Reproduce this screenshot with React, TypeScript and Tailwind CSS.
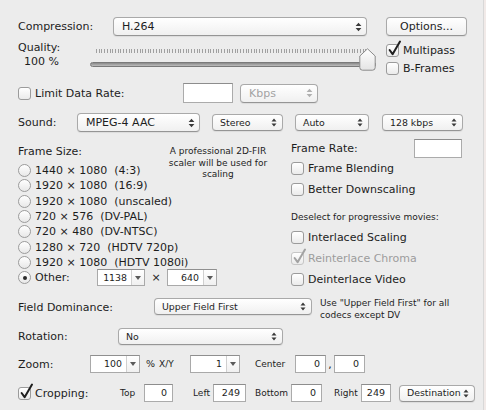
import React from "react";

function Arrows({ small, disabled }: { small?: boolean; disabled?: boolean }) {
  const c = disabled ? "#b0b0b0" : "#3a3a3a";
  return small ? (
    <svg width="6" height="9" viewBox="0 0 6 9" className="shrink-0">
      <path d="M0.5 3.6 L3 0.6 L5.5 3.6Z M0.5 5.4 L3 8.4 L5.5 5.4Z" fill={c} />
    </svg>
  ) : (
    <svg width="7" height="10" viewBox="0 0 7 10" className="shrink-0">
      <path d="M0.6 4 L3.5 0.7 L6.4 4Z M0.6 6 L3.5 9.3 L6.4 6Z" fill={c} />
    </svg>
  );
}

function Popup({
  label,
  className,
  small,
  disabled,
}: {
  label: string;
  className: string;
  small?: boolean;
  disabled?: boolean;
}) {
  return (
    <div
      className={`flex shrink-0 items-center justify-between rounded-[4px] border border-[#a9a9a9] border-b-[#959595] bg-gradient-to-b from-white to-[#f0f0f0] shadow-[0_1px_1px_rgba(0,0,0,0.07)] ${
        small ? "pl-[7px] pr-[5px] text-[9.4px]" : "pl-[8px] pr-[4px]"
      } ${disabled ? "text-[#a3a3a3]" : ""} ${className}`}
    >
      <span className="whitespace-pre leading-none">{label}</span>
      <Arrows small={small} disabled={disabled} />
    </div>
  );
}

function Check({ checked, disabled }: { checked?: boolean; disabled?: boolean }) {
  return (
    <span
      className={`relative inline-block h-[13px] w-[13px] shrink-0 rounded-[3px] border bg-gradient-to-b from-white to-[#ebebeb] ${
        disabled ? "border-[#c6c6c6]" : "border-[#9b9b9b]"
      }`}
    >
      {checked && (
        <svg className="absolute left-[0px] top-[-5px]" width="15" height="17" viewBox="0 0 15 17">
          <path
            d="M2.6 10 L5.6 14.2 L13 1.5"
            fill="none"
            stroke={disabled ? "#a2a2a2" : "#1f1f1f"}
            strokeWidth="2"
            strokeLinecap="round"
            strokeLinejoin="round"
          />
        </svg>
      )}
    </span>
  );
}

function CheckRow({
  label,
  checked,
  disabled,
  className,
}: {
  label: string;
  checked?: boolean;
  disabled?: boolean;
  className: string;
}) {
  return (
    <div className={`flex shrink-0 items-center gap-[4px] ${disabled ? "text-[#9c9c9c]" : ""} ${className}`}>
      <Check checked={checked} disabled={disabled} />
      <span className="whitespace-nowrap leading-none">{label}</span>
    </div>
  );
}

function Radio({ selected }: { selected?: boolean }) {
  return (
    <span className="flex h-[13px] w-[13px] shrink-0 items-center justify-center rounded-full border border-[#9b9b9b] bg-gradient-to-b from-white to-[#e8e8e8]">
      {selected && <span className="h-[4px] w-[4px] rounded-full bg-[#2a2a2a]" />}
    </span>
  );
}

function Combo({ value, className }: { value: string; className: string }) {
  return (
    <div className={`flex shrink-0 border border-[#a9a9a9] border-t-[#8f8f8f] bg-white ${className}`}>
      <div className="flex flex-1 items-center justify-end pr-[4px] text-[9.4px] leading-none">{value}</div>
      <div className="flex w-[13px] items-center justify-center border-l border-[#d0d0d0] bg-gradient-to-b from-white to-[#f0f0f0]">
        <svg width="6" height="4" viewBox="0 0 6 4">
          <path d="M0 0 H6 L3 4Z" fill="#5a5a5a" />
        </svg>
      </div>
    </div>
  );
}

function Field({ value, className }: { value?: string; className: string }) {
  return (
    <div
      className={`flex shrink-0 items-center justify-end border border-[#ababab] border-t-[#8d8d8d] bg-white pr-[5px] text-[9.5px] leading-none ${className}`}
    >
      {value}
    </div>
  );
}

const sizes: string[] = [
  "1440 × 1080  (4:3)",
  "1920 × 1080  (16:9)",
  "1920 × 1080  (unscaled)",
  "720 × 576  (DV-PAL)",
  "720 × 480  (DV-NTSC)",
  "1280 × 720  (HDTV 720p)",
  "1920 × 1080  (HDTV 1080i)",
];

export default function App() {
  return (
    <div className="flex h-[410px] w-[486px] overflow-hidden bg-[#ececec] font-['DejaVu_Sans',sans-serif] text-[11px] text-[#1d1d1d]">
      <div className="flex w-[484px] shrink-0 flex-col border-r border-[#d8d8d8] pl-[18px]">
        {/* Compression */}
        <div className="mt-[17px] flex h-[19px] items-center">
          <div className="w-[95px] shrink-0 leading-none">Compression:</div>
          <Popup label="H.264" className="h-[19px] w-[254px]" />
          <div className="ml-[19px] flex h-[19px] w-[81px] shrink-0 items-center justify-center rounded-[4px] border border-[#a9a9a9] border-b-[#959595] bg-gradient-to-b from-white to-[#f0f0f0] shadow-[0_1px_1px_rgba(0,0,0,0.07)] leading-none">
            Options...
          </div>
        </div>

        {/* Quality */}
        <div className="mt-[5px] flex h-[36px] items-start">
          <div className="w-[72px] shrink-0 leading-[14px]">
            <div>Quality:</div>
            <div className="pl-[6px]">100 %</div>
          </div>
          <div className="relative h-[30px] w-[286px] shrink-0">
            <div className="ml-[6px] mr-[8px] mt-[8px] h-[4px] bg-[repeating-linear-gradient(90deg,#a0a0a0_0px,#a0a0a0_1px,transparent_1px,transparent_2.72px)]" />
            <div className="mt-[9px] h-[5px] rounded-full border border-[#7a7a7a] bg-gradient-to-b from-[#8a8a8a] to-[#bdbdbd]" />
            <svg className="absolute left-[269px] top-[7px]" width="17" height="23" viewBox="0 0 17 23">
              <defs>
                <linearGradient id="thumbg" x1="0" y1="0" x2="0" y2="1">
                  <stop offset="0" stopColor="#ffffff" />
                  <stop offset="1" stopColor="#e4e4e4" />
                </linearGradient>
              </defs>
              <path
                d="M8.5 0.8 L16.2 8 V19.5 Q16.2 22.2 13.5 22.2 H3.5 Q0.8 22.2 0.8 19.5 V8 Z"
                fill="url(#thumbg)"
                stroke="#8a8a8a"
                strokeWidth="1"
              />
            </svg>
          </div>
          <div className="ml-[10px] flex flex-col">
            <CheckRow label="Multipass" checked className="h-[18px]" />
            <CheckRow label="B-Frames" className="h-[18px]" />
          </div>
        </div>

        {/* Limit data rate */}
        <div className="mt-[6px] flex h-[20px] items-center">
          <CheckRow label="Limit Data Rate:" className="w-[165px]" />
          <Field className="h-[20px] w-[50px]" />
          <Popup label="Kbps" disabled className="ml-[7px] h-[19px] w-[78px]" />
        </div>

        {/* Sound */}
        <div className="mt-[10px] flex h-[19px] items-center">
          <div className="w-[59px] shrink-0 leading-none">Sound:</div>
          <Popup label="MPEG-4 AAC" className="h-[19px] w-[123px]" />
          <Popup label="Stereo" small className="ml-[12px] h-[17px] w-[71px]" />
          <Popup label="Auto" small className="ml-[12px] h-[17px] w-[74px]" />
          <Popup label="128 kbps" small className="ml-[13px] h-[17px] w-[81px]" />
        </div>

        {/* Frame size block */}
        <div className="mt-[7px] flex items-start">
          <div className="flex w-[147px] shrink-0 flex-col">
            <div className="mt-[6px] leading-[14px]">Frame Size:</div>
            <div className="mt-[4px] flex flex-col">
              {sizes.map((t) => (
                <div key={t} className="flex h-[15.3px] items-center gap-[4px]">
                  <Radio />
                  <span className="shrink-0 whitespace-pre leading-none">{t}</span>
                </div>
              ))}
              <div className="flex h-[15.3px] items-center">
                <Radio selected />
                <span className="ml-[4px] w-[62px] shrink-0 leading-none">Other:</span>
                <Combo value="1138" className="h-[17px] w-[48px]" />
                <span className="w-[22px] shrink-0 text-center leading-none">×</span>
                <Combo value="640" className="h-[17px] w-[50px]" />
              </div>
            </div>
          </div>
          <div className="mt-[7px] w-[106px] shrink-0 text-center text-[9px] leading-[11.5px]">
            A professional 2D-FIR
            <br />
            scaler will be used for
            <br />
            scaling
          </div>
          <div className="ml-[20px] flex w-[171px] shrink-0 flex-col">
            <div className="flex h-[19px] items-center justify-between">
              <span className="leading-none">Frame Rate:</span>
              <Field className="h-[19px] w-[48px]" />
            </div>
            <CheckRow label="Frame Blending" className="h-[21px]" />
            <CheckRow label="Better Downscaling" className="h-[21px]" />
            <div className="mt-[11px] text-[9px] leading-[12px]">Deselect for progressive movies:</div>
            <div className="mt-[4px] flex flex-col">
              <CheckRow label="Interlaced Scaling" className="h-[21px]" />
              <CheckRow label="Reinterlace Chroma" checked disabled className="h-[21px]" />
              <CheckRow label="Deinterlace Video" className="h-[21px]" />
            </div>
          </div>
        </div>

        {/* Field dominance */}
        <div className="mt-[7px] flex items-start">
          <div className="mt-[2px] w-[136px] shrink-0 leading-[17px]">Field Dominance:</div>
          <Popup label="Upper Field First" small className="mt-[1px] h-[17px] w-[158px]" />
          <div className="ml-[8px] shrink-0 text-[9px] leading-[12px]">
            Use "Upper Field First" for all
            <br />
            codecs except DV
          </div>
        </div>

        {/* Rotation */}
        <div className="mt-[7px] flex h-[17px] items-center">
          <div className="w-[100px] shrink-0 leading-none">Rotation:</div>
          <Popup label="No" small className="h-[17px] w-[165px]" />
        </div>

        {/* Zoom */}
        <div className="mt-[10px] flex h-[18px] items-center">
          <div className="w-[72px] shrink-0 leading-none">Zoom:</div>
          <Combo value="100" className="h-[18px] w-[50px]" />
          <span className="w-[18px] shrink-0 pl-[6px] text-[9.5px] leading-none">%</span>
          <span className="w-[32px] shrink-0 pl-[1px] text-[9px] leading-none">X/Y</span>
          <Combo value="1" className="h-[18px] w-[50px]" />
          <span className="w-[55px] shrink-0 pl-[15px] text-[9px] leading-none">Center</span>
          <Field value="0" className="h-[18px] w-[31px]" />
          <span className="w-[8px] shrink-0 text-center leading-none">,</span>
          <Field value="0" className="h-[18px] w-[31px]" />
        </div>

        {/* Cropping */}
        <div className="mt-[11px] flex h-[18px] items-center">
          <CheckRow label="Cropping:" checked className="w-[102px]" />
          <span className="w-[24px] shrink-0 text-[9px] leading-none">Top</span>
          <Field value="0" className="h-[18px] w-[29px]" />
          <span className="w-[40px] shrink-0 pl-[20px] text-[9px] leading-none">Left</span>
          <Field value="249" className="h-[18px] w-[33px]" />
          <span className="w-[45px] shrink-0 pl-[9px] text-[9px] leading-none">Bottom</span>
          <Field value="0" className="h-[18px] w-[31px]" />
          <span className="w-[39px] shrink-0 pl-[12px] text-[9px] leading-none">Right</span>
          <Field value="249" className="h-[18px] w-[30px]" />
          <Popup label="Destination" small className="ml-[8px] h-[17px] w-[76px]" />
        </div>
      </div>
      <div className="flex-1 bg-[#f1eae8]" />
    </div>
  );
}
